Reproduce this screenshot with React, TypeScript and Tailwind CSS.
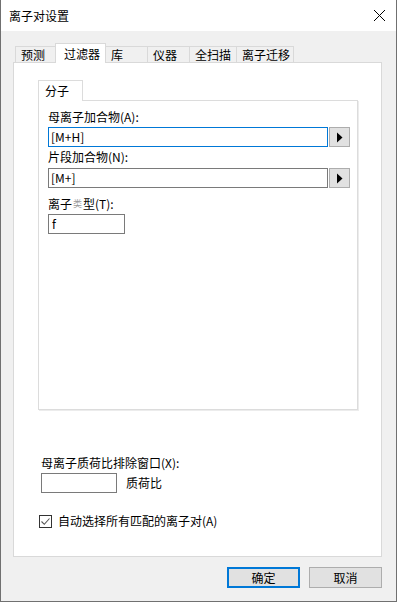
import React from "react";

const tabs = [
  { label: "预测", w: "w-[40px]" },
  { label: "过滤器", w: "w-[51px]", active: true },
  { label: "库", w: "w-[41px]" },
  { label: "仪器", w: "w-[42px]" },
  { label: "全扫描", w: "w-[47px]" },
  { label: "离子迁移", w: "w-[58px]", last: true },
];

const ArrowButton = () => (
  <button
    type="button"
    className="w-[21px] h-[20px] ml-[1px] flex items-center justify-center bg-[#e1e1e1] border border-[#adadad]"
  >
    <svg width="7" height="11" viewBox="0 0 7 11">
      <path d="M1 0.5 L6.5 5.5 L1 10.5 Z" fill="#000" />
    </svg>
  </button>
);

export default function App() {
  return (
    <div
      className="w-[397px] h-[602px] flex flex-col border-x border-b border-[#707070] bg-[#f0f0f0] text-[12px] leading-[16px] text-black"
      style={{ fontFamily: '"Noto Sans CJK SC", "Liberation Sans", sans-serif' }}
    >
      {/* 标题栏 */}
      <div className="h-[31px] bg-white flex items-center justify-between pl-[8px] pr-[10px]">
        <span>离子对设置</span>
        <svg width="13" height="13" viewBox="0 0 13 13">
          <path d="M1 1 L12 12 M12 1 L1 12" stroke="#000" strokeWidth="1" />
        </svg>
      </div>

      {/* 主体 */}
      <div className="flex flex-col pl-[12px] pr-[14px] pt-[12px]">
        {/* 选项卡 */}
        <div className="h-[19px] flex items-end pl-[2px] relative z-10">
          {tabs.map((t) =>
            t.active ? (
              <div
                key={t.label}
                className={`${t.w} h-[20px] -mb-px pl-[8px] bg-white border-x border-t border-[#d9d9d9] flex items-center relative z-10`}
              >
                {t.label}
              </div>
            ) : (
              <div
                key={t.label}
                className={`${t.w} h-[16px] pl-[5px] border-t ${t.last ? "border-r" : ""} ${
                  t.label === "库" ? "" : "border-l"
                } border-[#d9d9d9] flex items-center`}
              >
                {t.label}
              </div>
            )
          )}
        </div>

        {/* 面板 */}
        <div className="h-[495px] bg-white border border-[#d9d9d9] flex flex-col">
          <div className="ml-[24px] mt-[17px] flex flex-col">
            <div className="w-[45px] h-[21px] -mb-px pl-[6px] flex items-center bg-white border-x border-t border-[#dcdcdc] relative z-10">
              分子
            </div>
            <div className="w-[320px] h-[310px] border border-[#dcdcdc] shadow-[1px_1px_0_#ececec] flex flex-col pl-[9px] pt-[8px]">
              <div>母离子加合物(A):</div>
              <div className="mt-[2px] flex">
                <div className="w-[280px] h-[20px] border border-[#0078d7] pl-[2px] flex items-center">
                  [M+H]
                </div>
                <ArrowButton />
              </div>
              <div className="mt-[2px]">片段加合物(N):</div>
              <div className="mt-[3px] flex">
                <div className="w-[280px] h-[20px] border border-[#7a7a7a] pl-[2px] flex items-center">
                  [M+]
                </div>
                <ArrowButton />
              </div>
              <div className="mt-[8px] flex items-center">
                离子<span className="text-[9px] text-[#9a9a9a] mx-[1px]">类</span>型(T):
              </div>
              <div className="mt-[2px] w-[77px] h-[20px] border border-[#7a7a7a] pl-[3px] flex items-center">
                f
              </div>
            </div>
          </div>

          {/* 底部选项 */}
          <div className="ml-[27px] mt-[45px] flex flex-col">
            <div>母离子质荷比排除窗口(X):</div>
            <div className="mt-[2px] flex items-center">
              <div className="w-[76px] h-[20px] border border-[#7a7a7a] bg-white" />
              <span className="ml-[9px]">质荷比</span>
            </div>
            <div className="mt-[20px] -ml-[2px] flex items-center">
              <div className="w-[13px] h-[13px] border border-[#333] bg-white flex items-center justify-center">
                <svg width="11" height="11" viewBox="0 0 11 11">
                  <path d="M1.5 5.5 L4.3 8.3 L9.5 2.5" stroke="#555" strokeWidth="1.1" fill="none" />
                </svg>
              </div>
              <span className="ml-[6px]">自动选择所有匹配的离子对(A)</span>
            </div>
          </div>
        </div>

        {/* 按钮 */}
        <div className="mt-[10px] flex justify-end gap-[9px]">
          <button
            type="button"
            className="w-[73px] h-[21px] bg-[#e1e1e1] border-2 border-[#0078d7] flex items-center justify-center"
          >
            确定
          </button>
          <button
            type="button"
            className="w-[73px] h-[21px] bg-[#e1e1e1] border border-[#adadad] flex items-center justify-center"
          >
            取消
          </button>
        </div>
      </div>
    </div>
  );
}
